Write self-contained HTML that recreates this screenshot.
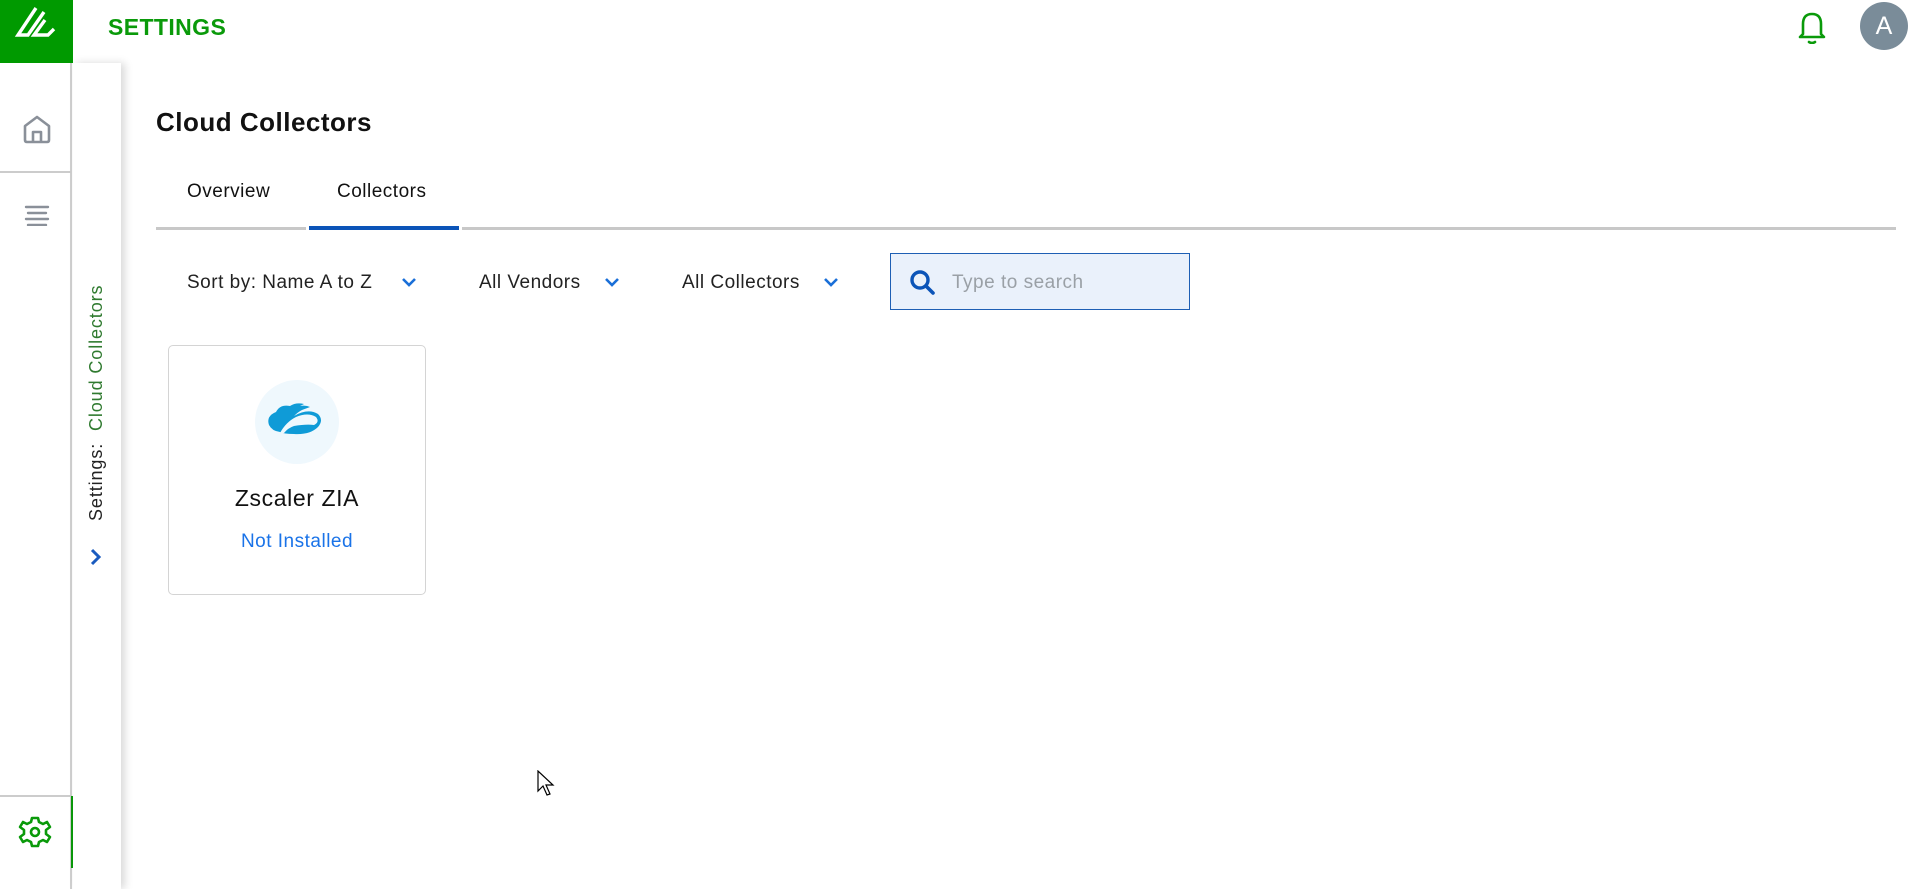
<!DOCTYPE html>
<html><head><meta charset="utf-8">
<style>
*{margin:0;padding:0;box-sizing:border-box}
body{width:1908px;height:889px;background:#fff;font-family:"Liberation Sans",sans-serif;position:relative;overflow:hidden;color:#111}
.abs{position:absolute}
.f{letter-spacing:0.5px}
</style></head><body>
<!-- logo -->
<div class="abs" style="left:0;top:0;width:73px;height:63px;background:#009a00">
<svg width="73" height="63" viewBox="0 0 73 63"><g fill="none" stroke="#fff" stroke-width="3.4" stroke-linejoin="miter">
<path d="M36 8 L18 35 L28 35 L44 12"/><path d="M45 20 L34 35 L48 35 L54 29"/></g></svg>
</div>
<div class="abs" style="left:108px;top:14px;font-size:23px;color:#0a9a0a;font-weight:bold;letter-spacing:0.4px">SETTINGS</div>
<!-- bell -->
<svg class="abs" style="left:1797px;top:10px" width="30" height="34" viewBox="0 0 30 34"><path d="M6 24 L6 14 Q6 4 15 4 Q24 4 24 14 L24 24 L27 27 L3 27 Z" fill="none" stroke="#0a9a0a" stroke-width="2.6" stroke-linejoin="round"/><path d="M12 32 Q15 34 18 32" stroke="#0a9a0a" stroke-width="2.6" fill="none" stroke-linecap="round"/></svg>
<div class="abs" style="left:1860px;top:2px;width:48px;height:48px;border-radius:50%;background:#7a8c99;color:#fff;font-size:25px;text-align:center;line-height:48px">A</div>
<!-- left nav -->
<div class="abs" style="left:0;top:63px;width:72px;height:826px;border-right:2px solid #d0d0d0;background:#fff"></div>
<div class="abs" style="left:0;top:171px;width:71px;height:2px;background:#ccc"></div>
<div class="abs" style="left:0;top:795px;width:71px;height:2px;background:#ccc"></div>
<svg class="abs" style="left:22px;top:114px" width="30" height="30" viewBox="0 0 30 30"><path d="M3 12 L15 3 L27 12 L27 26 Q27 28 25 28 L5 28 Q3 28 3 26 Z M11 28 L11 18 L19 18 L19 28" fill="none" stroke="#8a9099" stroke-width="2.6" stroke-linejoin="round"/></svg>
<svg class="abs" style="left:23px;top:204px" width="28" height="22" viewBox="0 0 28 22"><g stroke="#8a9099" stroke-width="2.4" stroke-linecap="round"><path d="M3 3H25M5 9H23M3 15H25M5 21H23"/></g></svg>
<svg class="abs" style="left:18px;top:815px" width="34" height="34" viewBox="0 0 34 34"><path d="M14 3 L20 3 L21 7 L25 9 L29 7 L32 12 L28 15 L28 19 L32 22 L29 27 L25 25 L21 27 L20 31 L14 31 L13 27 L9 25 L5 27 L2 22 L6 19 L6 15 L2 12 L5 7 L9 9 L13 7 Z" fill="none" stroke="#0a9a0a" stroke-width="2.6" stroke-linejoin="round"/><circle cx="17" cy="17" r="4" fill="none" stroke="#0a9a0a" stroke-width="2.6"/></svg>
<div class="abs" style="left:71px;top:796px;width:3px;height:72px;background:#0a9a0a"></div>
<!-- secondary panel -->
<div class="abs" style="left:73px;top:63px;width:48px;height:826px;background:#fff;box-shadow:4px 0 8px rgba(0,0,0,0.15)"></div>
<div class="abs" style="left:86px;top:521px;transform-origin:0 0;transform:rotate(-90deg);white-space:nowrap;font-size:18px;line-height:21px;letter-spacing:0.9px"><span style="color:#222">Settings:</span>&nbsp;&nbsp;<span style="color:#2f7a2f">Cloud Collectors</span></div>
<svg class="abs" style="left:89px;top:548px" width="14" height="18" viewBox="0 0 14 18"><path d="M3 2 L10 9 L3 16" fill="none" stroke="#1a5bbf" stroke-width="3"/></svg>
<!-- main -->
<div class="abs" style="left:156px;top:107px;font-size:26px;font-weight:bold;color:#111;letter-spacing:0.5px">Cloud Collectors</div>
<div class="abs f" style="left:187px;top:181px;font-size:19px;color:#111">Overview</div>
<div class="abs f" style="left:337px;top:181px;font-size:19px;color:#111">Collectors</div>
<div class="abs" style="left:156px;top:227px;width:150px;height:3px;background:#c8c8c8"></div>
<div class="abs" style="left:309px;top:226px;width:150px;height:4px;background:#0b54b8"></div>
<div class="abs" style="left:462px;top:227px;width:1434px;height:3px;background:#c8c8c8"></div>
<!-- filters -->
<div class="abs f" style="left:187px;top:272px;font-size:19px;color:#222">Sort by: Name A to Z</div>
<div class="abs f" style="left:479px;top:272px;font-size:19px;color:#222">All Vendors</div>
<div class="abs f" style="left:682px;top:272px;font-size:19px;color:#222">All Collectors</div>
<svg class="abs" style="left:401px;top:276px" width="16" height="12" viewBox="0 0 16 12"><path d="M2 3 L8 9 L14 3" fill="none" stroke="#1a6fd8" stroke-width="2.6"/></svg>
<svg class="abs" style="left:604px;top:276px" width="16" height="12" viewBox="0 0 16 12"><path d="M2 3 L8 9 L14 3" fill="none" stroke="#1a6fd8" stroke-width="2.6"/></svg>
<svg class="abs" style="left:823px;top:276px" width="16" height="12" viewBox="0 0 16 12"><path d="M2 3 L8 9 L14 3" fill="none" stroke="#1a6fd8" stroke-width="2.6"/></svg>
<div class="abs" style="left:890px;top:253px;width:300px;height:57px;background:#eaf1fb;border:1.5px solid #1e5fb4"></div>
<svg class="abs" style="left:907px;top:267px" width="32" height="32" viewBox="0 0 32 32"><circle cx="13" cy="13" r="8" fill="none" stroke="#0b54b8" stroke-width="3.4"/><path d="M19 19 L26 26" stroke="#0b54b8" stroke-width="3.6" stroke-linecap="round"/></svg>
<div class="abs f" style="left:952px;top:272px;font-size:19px;color:#9aa0a6">Type to search</div>
<!-- card -->
<div class="abs" style="left:168px;top:345px;width:258px;height:250px;border:1.5px solid #d4d4d4;border-radius:5px"></div>
<div class="abs" style="left:255px;top:380px;width:84px;height:84px;border-radius:50%;background:#eff8fd"></div>
<svg class="abs" style="left:266px;top:400px" width="60" height="40" viewBox="0 0 60 40"><path d="M10 12 Q14 4 24 6 Q30 2 38 4 L34 6 Q40 5 44 7 L36 10 Q32 12 28 16 Q42 8 52 14 Q58 20 52 27 Q44 35 28 34 Q18 34 14 32 Q6 31 3 25 Q0 16 10 12 Z" fill="#0f9bd7"/><path d="M14 33 Q20 22 30 17 Q42 12 50 17 Q54 22 48 25 Q40 24 28 26 Q22 28 18 33 Z" fill="#eff8fd"/></svg>
<div class="abs" style="left:168px;top:485px;width:258px;text-align:center;font-size:23px;color:#111;letter-spacing:0.6px">Zscaler ZIA</div>
<div class="abs f" style="left:168px;top:531px;width:258px;text-align:center;font-size:19px;color:#1a73e8">Not Installed</div>
<!-- cursor -->
<svg class="abs" style="left:537px;top:770px" width="20" height="28" viewBox="0 0 20 28"><path d="M1 1 L1 21 L6 16 L10 25 L13 24 L9 15 L16 15 Z" fill="#fff" stroke="#000" stroke-width="1.2"/></svg>
</body></html>
